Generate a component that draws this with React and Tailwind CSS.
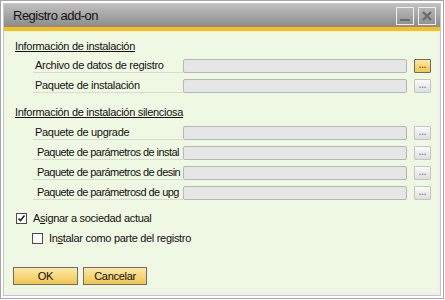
import { useState } from 'react';

const font = { fontFamily: '"Liberation Sans", Arial, sans-serif' };

function DotsButton({ active }) {
  return (
    <button
      type="button"
      className={`w-[17px] h-[14px] ml-[7px] flex items-end justify-center pb-[2px] rounded-[1px] text-[9px] font-bold leading-none tracking-normal ${
        active
          ? 'border border-[#6a6a6a] bg-gradient-to-b from-[#fde9a4] to-[#f3c74b] text-[#7a5a2a]'
          : 'border border-[#c4c4c4] bg-gradient-to-b from-[#fbfbfb] to-[#dedede] text-[#8a8a9a]'
      }`}
    >
      ...
    </button>
  );
}

function FieldRow({ label, active, indent }) {
  return (
    <div className="flex items-center h-[14px] ml-[20px]">
      <div
        className={`w-[150px] h-[14px] border-b border-[#d6dccd] overflow-hidden whitespace-nowrap text-[11px] leading-[13px] text-[#111] ${
          indent ? 'pl-[4px] tracking-[-0.55px]' : 'pl-[2px]'
        }`}
      >
        {label}
      </div>
      <div className="w-[224px] h-[14px] bg-[#e6e6e6] border border-[#b6b6b6] rounded-[2px]" />
      <DotsButton active={active} />
    </div>
  );
}

function Checkbox({ checked, onChange }) {
  return (
    <span
      onClick={onChange}
      className="w-[11px] h-[11px] bg-white border border-[#4a4a4a] flex items-center justify-center shrink-0"
    >
      {checked && (
        <svg width="9" height="9" viewBox="0 0 9 9">
          <polyline points="1.5,4.5 3.5,6.5 7.5,1.5" fill="none" stroke="#222" strokeWidth="1.6" />
        </svg>
      )}
    </span>
  );
}

export default function App() {
  const [assign, setAssign] = useState(true);
  const [install, setInstall] = useState(false);

  return (
    <div className="w-[445px] h-[300px] bg-white tracking-[-0.3px]" style={font}>
      <div className="w-[444px] h-[299px] border border-[#a6a6a6] p-[2px] bg-white">
        <div className="h-[293px] border border-[#c6c6c6] flex flex-col">
          {/* title bar */}
          <div className="h-[23px] bg-gradient-to-b from-[#c0c0c0] to-[#8b8b8b] flex items-center pl-[9px] pr-[4px]">
            <span className="text-[13px] tracking-[-0.5px] text-[#141414] flex-1">Registro add-on</span>
            <div className="w-[18px] h-[18px] border border-[#efefef] flex items-end justify-center pb-[3px]">
              <div className="w-[10px] h-[2px] bg-[#6b6b6b]" />
            </div>
            <div className="w-[18px] h-[18px] border border-[#efefef] ml-[4px] flex items-center justify-center">
              <svg width="10" height="10" viewBox="0 0 10 10">
                <path d="M1 1 L9 9 M9 1 L1 9" stroke="#6b6b6b" strokeWidth="2.4" />
              </svg>
            </div>
          </div>
          <div className="h-[4px] bg-[#fbbd16]" />

          <div className="flex-1 flex flex-col bg-[#f0f0f0] pr-[3px] pb-[3px]">
            <div className="flex-1 bg-[#eff8e3] pl-[9px] pt-[9px] flex flex-col">
              <div className="ml-[2px] h-[13px] text-[11px] leading-[13px] underline text-[#111]">
                Información de instalación
              </div>
              <div className="mt-[6px] flex flex-col gap-[6px]">
                <FieldRow label="Archivo de datos de registro" active />
                <FieldRow label="Paquete de instalación" />
              </div>

              <div className="mt-[13px] ml-[2px] h-[13px] text-[11px] leading-[13px] underline text-[#111]">
                Información de instalación silenciosa
              </div>
              <div className="mt-[7px] flex flex-col gap-[6px]">
                <FieldRow label="Paquete de upgrade" />
                <FieldRow label="Paquete de parámetros de instal" indent />
                <FieldRow label="Paquete de parámetros de desin" indent />
                <FieldRow label="Paquete de parámetrosd de upg" indent />
              </div>

              <label className="mt-[12px] ml-[3px] h-[13px] flex items-center gap-[6px] text-[11px] text-[#111]">
                <Checkbox checked={assign} onChange={() => setAssign(!assign)} />
                <span>
                  A<span className="underline">s</span>ignar a sociedad actual
                </span>
              </label>
              <label className="mt-[7px] ml-[19px] h-[13px] flex items-center gap-[6px] text-[11px] text-[#111]">
                <Checkbox checked={install} onChange={() => setInstall(!install)} />
                <span>
                  In<span className="underline">s</span>talar como parte del registro
                </span>
              </label>

              <div className="mt-[22px] flex gap-[5px]">
                <button
                  type="button"
                  className="w-[65px] h-[18px] border border-[#6e6e6e] bg-gradient-to-b from-[#fbe8a6] to-[#f2c64c] text-[11px] text-[#111]"
                >
                  OK
                </button>
                <button
                  type="button"
                  className="w-[64px] h-[18px] border border-[#6e6e6e] bg-gradient-to-b from-[#fbe8a6] to-[#f2c64c] text-[11px] text-[#111]"
                >
                  Cancelar
                </button>
              </div>
            </div>
          </div>
        </div>
      </div>
    </div>
  );
}
